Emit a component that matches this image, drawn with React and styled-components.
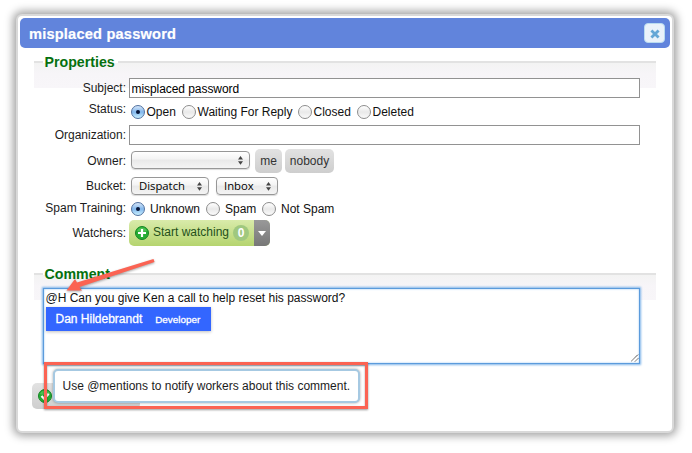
import React from 'react';
import styled, { createGlobalStyle, css } from 'styled-components';

const GlobalStyle = createGlobalStyle`
  *, *::before, *::after { box-sizing: border-box; }
  body {
    margin: 0;
    background: #fff;
    color: #1c1c1c;
    font: 12px/16px "Liberation Sans", Arial, Helvetica, sans-serif;
    overflow: hidden;
  }
`;

const Page = styled.main`
  height: 453px;
  padding: 14px 18px 20px 16px;
`;

const Dialog = styled.section`
  position: relative;
  height: 419px;
  padding: 2px;
  background: #fff;
  border: 2px solid #d9d9d9;
  border-radius: 6px;
  box-shadow: 0 0 8px 3px rgba(0, 0, 0, 0.36);
`;

const TitleBar = styled.header`
  display: flex;
  align-items: center;
  justify-content: space-between;
  height: 30px;
  padding: 0 5px 0 9px;
  border-radius: 5px;
  background: #6184dc;
`;

const Title = styled.h1`
  margin: 0;
  padding-top: 2px;
  color: #fff;
  font-size: 14.6px;
  letter-spacing: 0.2px;
  line-height: 16px;
  white-space: nowrap;
  -webkit-text-stroke: 0.2px #fff;
`;

const CloseButton = styled.button`
  display: grid;
  place-items: center;
  width: 21px;
  height: 20px;
  padding: 1px 0 0 1px;
  border: 1px solid #b9dbf0;
  border-radius: 4px;
  background: #eaf2fa;
`;

const Group = styled.section`
  height: ${(p) => p.$height}px;
  margin: ${(p) => p.$top}px 14px 0;
`;

const GroupHead = styled.div`
  height: 27px;
  padding-left: 9px;
  border-top: 2px solid #e2e2e2;
  background: linear-gradient(#f3f3f3, #f7f5f8 45%, #f8f6f9);
`;

const Legend = styled.h2`
  width: max-content;
  height: 3px;
  margin: -3px 0 0;
  padding: 0 3px 0 1.5px;
  color: #06700e;
  font-size: 14.2px;
  line-height: 5px;
  background: #fff;
`;

const Fields = styled.div`
  margin-top: -10px;
`;

const Row = styled.div`
  display: flex;
  align-items: flex-start;
  height: ${(p) => p.$h}px;
  margin-top: ${(p) => p.$gap || 0}px;
`;

const Label = styled.label`
  flex: none;
  width: 95px;
  padding: ${(p) => p.$drop || 0}px 3px 0 0;
  text-align: right;
  white-space: nowrap;
`;

const TextInput = styled.input`
  width: 511px;
  height: 20px;
  padding: 1px 1.5px 0;
  border: 1px solid #929292;
  border-radius: 0;
  background: #fff;
  color: #000;
  font: inherit;
  letter-spacing: -0.06px;
  outline: 0;
`;

const Options = styled.div`
  display: flex;
  padding: ${(p) => p.$top}px 0 0 2px;
`;

const Option = styled.span`
  display: flex;
  align-items: center;
  gap: ${(p) => p.$space}px;
  width: ${(p) => p.$w}px;
  height: 14px;
  color: #111;
  white-space: nowrap;
`;

const Radio = styled.span`
  display: grid;
  place-items: center;
  flex: none;
  width: 14px;
  height: 14px;
  border: 1px solid #8d8d8d;
  border-radius: 50%;
  background: linear-gradient(#fff, #e9e9e9 50%, #fafafa);
  ${(p) => p.$on && css`
    border-color: #51719f;
    background: linear-gradient(#d5e5f9, #82b7ec 50%, #c8efff);
    &::after {
      content: '';
      width: 4px;
      height: 4px;
      border-radius: 50%;
      background: #071537;
    }
  `}
`;

const SelectBox = styled.div`
  display: flex;
  justify-content: space-between;
  align-items: center;
  width: ${(p) => p.$w}px;
  height: 18px;
  margin: ${(p) => p.$top || 0}px 5px 0 2px;
  padding: 0 6px 0 7px;
  border: 1px solid #979797;
  border-radius: 4px;
  background: linear-gradient(#fff, #f3f3f3 45%, #e9e9e9 50%, #f4f4f4);
  box-shadow: 0 1px 1px rgba(0, 0, 0, 0.15);
  color: #000;
  font: 11.3px/16px "Open Sans", "Noto Sans", sans-serif;
`;

const GrayButton = styled.button`
  height: 24px;
  width: ${(p) => p.$w}px;
  margin-right: 3px;
  padding: 0;
  border: 0;
  border-radius: 5px;
  background: linear-gradient(#e2e2e2, #cecece);
  color: #333;
  font: inherit;
`;

const WatchButton = styled.div`
  display: flex;
  width: 141px;
  height: 26px;
  overflow: hidden;
  border-radius: 5px;
  background: linear-gradient(#d9ebaa, #b5d46f);
  color: #24501a;
`;

const WatchMain = styled.div`
  display: flex;
  align-items: center;
  width: 125px;
  padding-left: 6px;
  white-space: nowrap;
`;

const WatchText = styled.span`
  margin: -2px 4px 0 4px;
`;

const Count = styled.span`
  width: 16px;
  height: 16px;
  margin-top: -1px;
  border-radius: 8px;
  background: #a0c87f;
  color: #fff;
  font-weight: bold;
  text-align: center;
`;

const WatchMenu = styled.div`
  display: grid;
  place-items: center;
  width: 16px;
  background: linear-gradient(#999, #777);
`;

const Editor = styled.div`
  position: relative;
  width: 597px;
  height: 76px;
  margin: -12px 0 0 9px;
  padding: 1px;
  border: 1px solid #5b9bdc;
  box-shadow: 0 0 2px 1px #80b5ea, inset 0 0 2px #8fbfee;
  background: #fff;
  color: #111;
`;

const EditorText = styled.div`
  padding-left: 0.5px;
  white-space: nowrap;
`;

const Grip = styled.svg`
  position: absolute;
  right: 0;
  bottom: 1px;
`;

const Suggestion = styled.div`
  position: absolute;
  left: 2px;
  top: 18px;
  display: flex;
  width: 165px;
  height: 24px;
  padding: 4px 0 0 9.5px;
  background: #3366ff;
  color: #fff;
  box-shadow: 0 1px 3px rgba(0, 0, 0, 0.25);
  white-space: nowrap;
  -webkit-text-stroke: 0.3px #fff;
`;

const Role = styled.small`
  margin: 1px 0 0 13px;
  font-size: 9.9px;
`;

const SaveButton = styled.button`
  display: flex;
  align-items: center;
  width: 108px;
  height: 26px;
  margin: 19px 0 0 12px;
  padding: 0 6px;
  border: 0;
  border-radius: 5px;
  background: linear-gradient(#e2e2e2, #cecece);
`;

const Callout = styled.div`
  position: absolute;
  left: 26px;
  top: 346px;
  width: 324px;
  height: 47px;
  padding: 4px 5px 3px 6px;
  border: 3px solid #fb6353;
  box-shadow: 0 1px 2px rgba(0, 0, 0, 0.4), inset 0 1px 2px rgba(0, 0, 0, 0.4);
`;

const Tooltip = styled.div`
  width: 307px;
  height: 34px;
  padding: 7px 7.5px;
  border: 2px solid #a6c9e2;
  border-radius: 5px;
  background: #fff;
  box-shadow: 0 0 3px rgba(0, 0, 0, 0.35);
  white-space: nowrap;
`;

const Arrow = styled.svg`
  position: absolute;
  left: 42px;
  top: 238px;
  overflow: visible;
  filter: drop-shadow(0 1px 1px rgba(0, 0, 0, 0.35));
`;

const Choice = ({ w, space = 1.5, on, children }) => (
  <Option $w={w} $space={space}><Radio $on={on} />{children}</Option>
);

const Select = ({ w, top, children }) => (
  <SelectBox $w={w} $top={top}>
    <span>{children}</span>
    <svg width="5" height="9" viewBox="0 0 5 9" fill="#444">
      <path d="M2.5 0 5 3.5H0zM0 5.2h5L2.5 8.7z" />
    </svg>
  </SelectBox>
);

const GreenBadge = ({ check }) => (
  <svg width="14" height="14" viewBox="0 0 14 14">
    <circle cx="7" cy="7" r="6.5" fill="#26ad33" stroke="#158525" />
    <path d="M2 5a5.3 5.3 0 0 1 10 0Q7 7 2 5z" fill="#67cf65" opacity=".6" />
    <path d={check ? 'M3.5 7 6.2 9.8 10.7 4.7' : 'M7 3v8M3 7h8'} fill="none" stroke="#fff" strokeWidth="2.2" />
  </svg>
);

export default function App() {
  return (
    <>
      <GlobalStyle />
      <Page>
        <Dialog>
          <TitleBar>
            <Title>misplaced password</Title>
            <CloseButton aria-label="Close">
              <svg width="10" height="10" viewBox="0 0 10 10">
                <path d="m2.4 2.4 5.2 5.2m0-5.2L2.4 7.6" stroke="#66a7d6" strokeWidth="2.8" strokeLinecap="square" />
              </svg>
            </CloseButton>
          </TitleBar>

          <Group $top={13} $height={212}>
            <GroupHead><Legend>Properties</Legend></GroupHead>
            <Fields>
              <Row $h={20}>
                <Label $drop={2}>Subject:</Label>
                <TextInput defaultValue="misplaced password" />
              </Row>
              <Row $h={20} $gap={3}>
                <Label>Status:</Label>
                <Options $top={4}>
                  <Choice w={51} on>Open</Choice>
                  <Choice w={116}>Waiting For Reply</Choice>
                  <Choice w={59}>Closed</Choice>
                  <Choice w={60}>Deleted</Choice>
                </Options>
              </Row>
              <Row $h={20} $gap={4}>
                <Label $drop={2}>Organization:</Label>
                <TextInput />
              </Row>
              <Row $h={24} $gap={4}>
                <Label $drop={4}>Owner:</Label>
                <Select w={119} top={2} />
                <GrayButton $w={27}>me</GrayButton>
                <GrayButton $w={49}>nobody</GrayButton>
              </Row>
              <Row $h={18} $gap={4}>
                <Label $drop={1}>Bucket:</Label>
                <Select w={78}>Dispatch</Select>
                <Select w={62}>Inbox</Select>
              </Row>
              <Row $h={16} $gap={5}>
                <Label>Spam Training:</Label>
                <Options $top={2}>
                  <Choice w={75} space={5} on>Unknown</Choice>
                  <Choice w={56} space={5}>Spam</Choice>
                  <Choice w={80} space={5}>Not Spam</Choice>
                </Options>
              </Row>
              <Row $h={26} $gap={4}>
                <Label $drop={5}>Watchers:</Label>
                <WatchButton>
                  <WatchMain>
                    <GreenBadge />
                    <WatchText>Start watching</WatchText>
                    <Count>0</Count>
                  </WatchMain>
                  <WatchMenu>
                    <svg width="8" height="5" viewBox="0 0 8 5"><path d="M0 0h8L4 5z" fill="#fff" /></svg>
                  </WatchMenu>
                </WatchButton>
              </Row>
            </Fields>
          </Group>

          <Group $top={0} $height={91}>
            <GroupHead><Legend>Comment</Legend></GroupHead>
            <Editor>
              <EditorText>@H Can you give Ken a call to help reset his password?</EditorText>
              <Suggestion>Dan Hildebrandt<Role>Developer</Role></Suggestion>
              <Grip width="8" height="8" viewBox="0 0 8 8">
                <path d="M0 7.5 7.5 0M4 7.5 7.5 4" stroke="#333" strokeDasharray="1.2 .4" />
              </Grip>
            </Editor>
          </Group>
          <SaveButton aria-label="Save"><GreenBadge check /></SaveButton>

          <Callout>
            <Tooltip>Use @mentions to notify workers about this comment.</Tooltip>
          </Callout>
          <Arrow width="96" height="40" viewBox="60 254 96 40">
            <path d="M153.5 259 77 282.5 75 279 66.5 290.5 82 290.5 79.5 287 154.5 262z" fill="#fb6353" />
          </Arrow>
        </Dialog>
      </Page>
    </>
  );
}
